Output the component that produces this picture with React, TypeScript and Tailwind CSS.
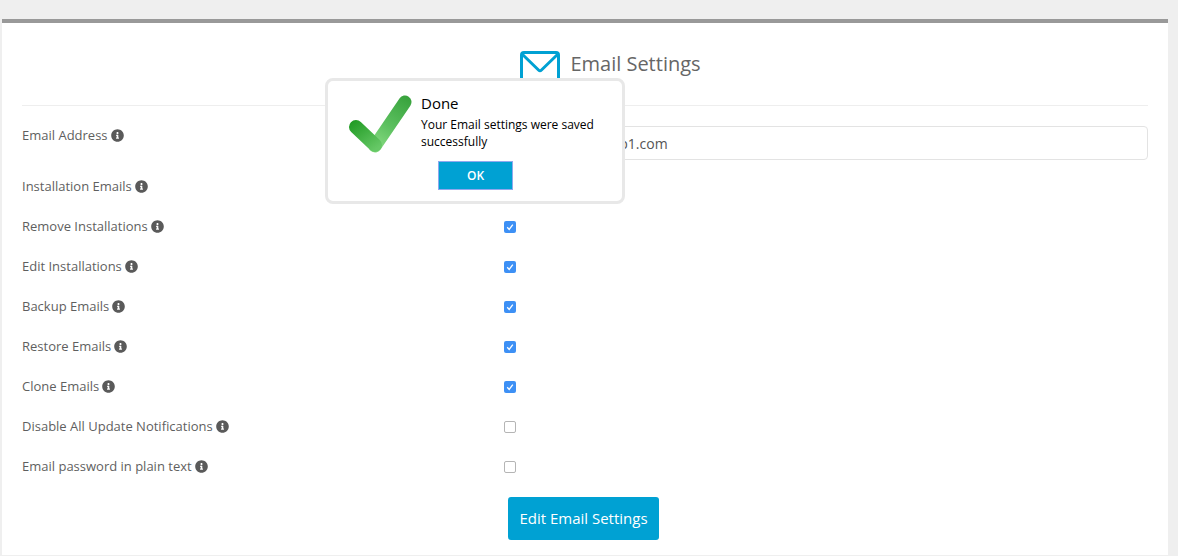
import React from 'react';
import { FaInfoCircle } from 'react-icons/fa';

const ROWS = [
  { label: 'Remove Installations', checked: true },
  { label: 'Edit Installations', checked: true },
  { label: 'Backup Emails', checked: true },
  { label: 'Restore Emails', checked: true },
  { label: 'Clone Emails', checked: true },
  { label: 'Disable All Update Notifications', checked: false },
  { label: 'Email password in plain text', checked: false },
];

function Label({ text }: { text: string }) {
  return (
    <span className="flex items-center gap-[3px] text-[13px] leading-[18px] text-[#5f5f5f]">
      {text}
      <FaInfoCircle size={13} className="text-[#5a5a5a]" />
    </span>
  );
}

function Check({ checked }: { checked: boolean }) {
  return checked ? (
    <span className="w-3 h-3 rounded-[2px] bg-[#3d90f5] flex items-center justify-center">
      <svg width="10" height="10" viewBox="0 0 10 10" fill="none">
        <path d="M2.2 5.2 L4.2 7.4 L7.8 2.6" stroke="#fff" strokeWidth="1.3" />
      </svg>
    </span>
  ) : (
    <span className="w-3 h-3 rounded-[2px] bg-white border border-[#b5b5b5]" />
  );
}

function DoneDialog() {
  return (
    <div className="absolute left-[325px] top-[78px] w-[300px] h-[126px] bg-white border-[3px] border-[#e8e8e8] rounded-lg flex">
      <svg className="ml-[20px] mt-[10px]" width="66" height="68" viewBox="0 0 66 68" fill="none">
        <defs>
          <linearGradient id="tick" x1="60" y1="3" x2="24" y2="60" gradientUnits="userSpaceOnUse">
            <stop offset="0" stopColor="#35a03a" />
            <stop offset="0.55" stopColor="#5cc05f" />
            <stop offset="1" stopColor="#8fe088" />
          </linearGradient>
          <linearGradient id="tickShort" x1="6" y1="28" x2="28" y2="58" gradientUnits="userSpaceOnUse">
            <stop offset="0" stopColor="#1f9a22" />
            <stop offset="1" stopColor="#66c866" />
          </linearGradient>
        </defs>
        <path d="M27 55 L57 11" stroke="url(#tick)" strokeWidth="13" strokeLinecap="round" />
        <path d="M8 36 L27 54" stroke="url(#tickShort)" strokeWidth="14" strokeLinecap="round" />
      </svg>
      <div className="ml-[7px] pt-[12px] w-[200px] text-black">
        <div className="text-[15px] leading-[20px]">Done</div>
        <div className="mt-[3px] text-[12px] leading-[17px]">Your Email settings were saved successfully</div>
        <button className="mt-[11px] ml-[17px] block w-[75px] h-[29px] bg-[#00a1d3] border border-[#8fa8ee] text-white text-[12px] font-semibold">
          OK
        </button>
      </div>
    </div>
  );
}

export default function App() {
  return (
    <div
      className="relative h-[556px] overflow-hidden bg-[#efefef] pt-[19px] pl-[2px]"
      style={{ fontFamily: '"Open Sans", sans-serif' }}
    >
      <div className="w-[1166px] h-[536px] bg-white border-t-4 border-[#999] px-5">
        {/* Heading */}
        <div className="h-[83px] border-b border-[#eeeeee] flex justify-center pl-[51px] pt-[27px]">
          <svg width="40" height="32" viewBox="0 0 40 32" fill="none" className="mr-[10px] mt-[1px]">
            <rect x="1.5" y="1.5" width="37" height="29" rx="2.5" stroke="#00a1d3" strokeWidth="3" />
            <path d="M2 3 L18.5 19 Q20 20.4 21.5 19 L38 3" stroke="#00a1d3" strokeWidth="3" />
          </svg>
          <h2 className="text-[20px] leading-[28px] text-[#666] font-normal">Email Settings</h2>
        </div>

        {/* Address */}
        <div className="flex h-[55px] pt-[20px]">
          <div className="w-[482px] h-[19px]">
            <Label text="Email Address" />
          </div>
          <input
            readOnly
            defaultValue="admins@webapp1.com"
            className="flex-1 h-[34px] border border-[#e3e3e3] rounded-[4px] px-[10px] text-[14px] text-[#555] outline-none"
          />
        </div>

        <div className="flex items-center h-[40px] mt-[6px]">
          <div className="w-[482px] pb-[2px]">
            <Label text="Installation Emails" />
          </div>
          <Check checked />
        </div>

        {ROWS.map((row) => (
          <div key={row.label} className="flex items-center h-[40px]">
            <div className="w-[482px] pb-[2px]">
              <Label text={row.label} />
            </div>
            <Check checked={row.checked} />
          </div>
        ))}

        <div className="flex justify-center mt-[10px] pr-[3px]">
          <button className="w-[151px] h-[43px] rounded-[3px] bg-[#00a1d3] text-white text-[15px]">
            Edit Email Settings
          </button>
        </div>
      </div>
      <DoneDialog />
    </div>
  );
}
